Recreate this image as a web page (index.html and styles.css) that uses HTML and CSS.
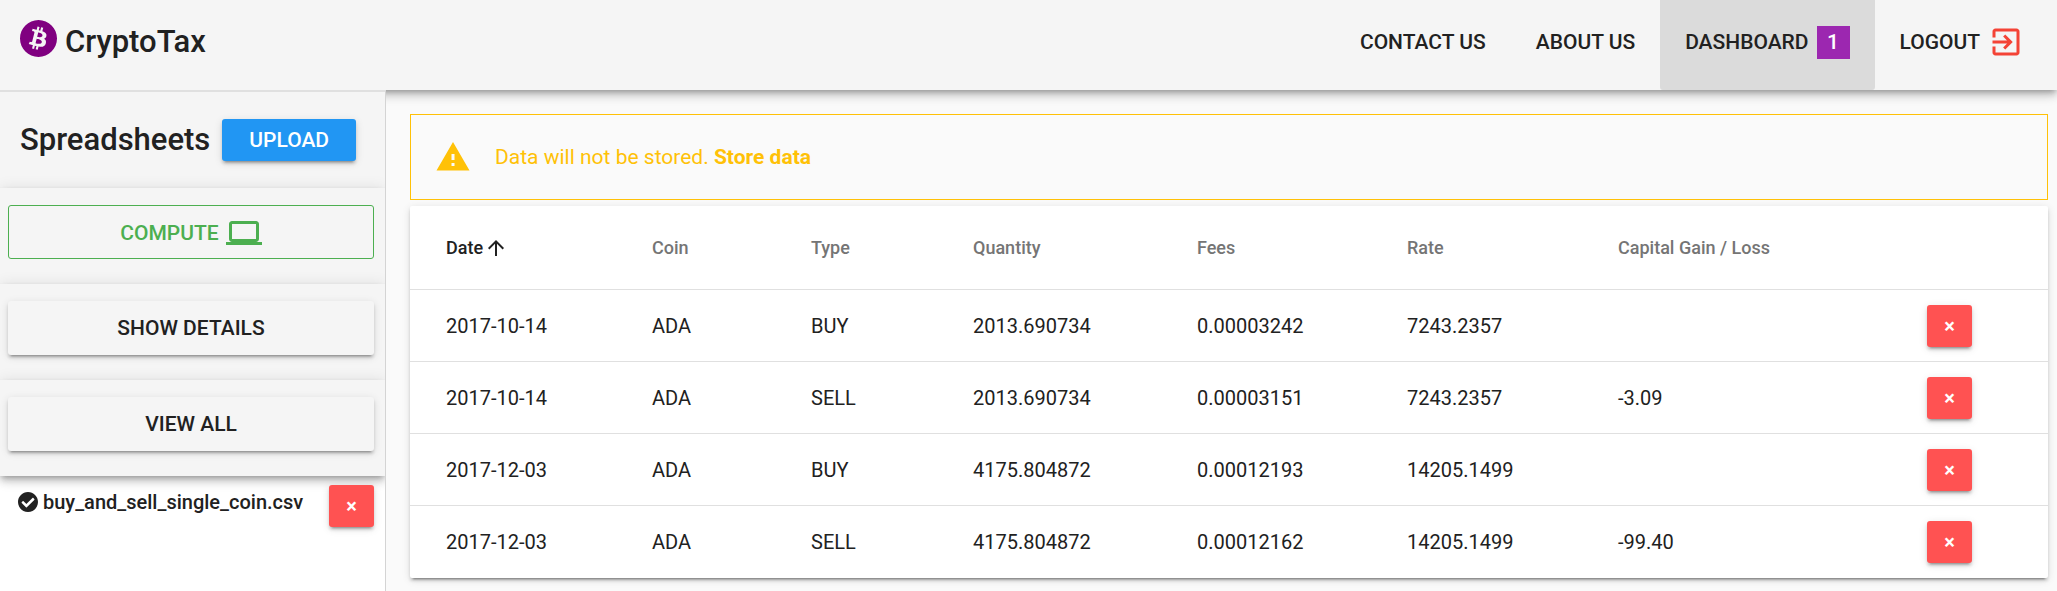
FILE: index.html
```html
<!DOCTYPE html>
<html lang="en">
<head>
<meta charset="utf-8">
<title>CryptoTax</title>
<link rel="stylesheet" href="styles.css">
</head>
<body>
<header class="topbar">
  <div class="brand">
    <svg class="brand-logo" viewBox="8 8 496 496" aria-hidden="true"><path d="M504 256c0 136.967-111.033 248-248 248S8 392.967 8 256 119.033 8 256 8s248 111.033 248 248zm-141.651-35.33c4.937-32.999-20.191-50.739-54.55-62.573l11.146-44.702-27.213-6.781-10.851 43.524c-7.154-1.783-14.502-3.464-21.803-5.13l10.929-43.81-27.198-6.781-11.153 44.686c-5.922-1.349-11.735-2.682-17.377-4.084l.031-.14-37.53-9.37-7.239 29.062s20.191 4.627 19.765 4.913c11.022 2.751 13.014 10.044 12.68 15.825l-12.696 50.925c.76.194 1.744.473 2.829.907-.907-.225-1.876-.473-2.876-.713l-17.796 71.338c-1.349 3.348-4.767 8.37-12.471 6.464.271.395-19.78-4.937-19.78-4.937l-13.51 31.147 35.414 8.827c6.588 1.651 13.045 3.379 19.4 5.006l-11.262 45.213 27.182 6.781 11.153-44.733a1038.209 1038.209 0 0 0 21.687 5.627l-11.115 44.523 27.213 6.781 11.262-45.128c46.404 8.781 81.299 5.239 95.986-36.727 11.834-33.79-.589-53.281-25.004-65.991 17.78-4.098 31.174-15.792 34.747-39.949zm-62.177 87.179c-8.41 33.79-65.308 15.523-83.755 10.943l14.944-59.899c18.446 4.603 77.6 13.717 68.811 48.956zm8.417-87.667c-7.673 30.736-55.031 15.12-70.393 11.292l13.548-54.327c15.363 3.828 64.836 10.973 56.845 43.035z"/></svg>
    <h1 class="title">CryptoTax</h1>
  </div>
  <nav class="nav">
    <a class="nav-link" href="#contact">CONTACT US</a>
    <a class="nav-link" href="#about">ABOUT US</a>
    <a class="nav-link nav-link-active" href="#dashboard">DASHBOARD <span class="badge">1</span></a>
    <a class="nav-link" href="#logout">LOGOUT
      <svg class="icon icon-logout" viewBox="0 0 24 24" aria-hidden="true"><path d="M10.09 15.59L11.5 17l5-5-5-5-1.41 1.41L12.67 11H3v2h9.67l-2.58 2.59zM19 3H5c-1.11 0-2 .9-2 2v4h2V5h14v14H5v-4H3v4c0 1.1.89 2 2 2h14c1.1 0 2-.9 2-2V5c0-1.1-.9-2-2-2z"/></svg>
    </a>
  </nav>
</header>
<div class="layout">
  <aside class="sidebar">
    <section class="panel panel-head">
      <h2 class="title">Spreadsheets</h2>
      <button class="btn btn-upload" type="button">UPLOAD</button>
    </section>
    <section class="panel">
      <button class="btn btn-wide btn-compute" type="button">COMPUTE
        <svg class="icon" viewBox="0 0 24 24" aria-hidden="true"><path d="M20 18c1.1 0 1.99-.9 1.99-2L22 6c0-1.1-.9-2-2-2H4c-1.1 0-2 .9-2 2v10c0 1.1.9 2 2 2H0v2h24v-2h-4zM4 6h16v10H4V6z"/></svg>
      </button>
    </section>
    <section class="panel"><button class="btn btn-wide" type="button">SHOW DETAILS</button></section>
    <section class="panel"><button class="btn btn-wide" type="button">VIEW ALL</button></section>
    <ul class="files">
      <li class="file">
        <span class="file-name">
          <svg class="icon-check" viewBox="8 8 496 496" aria-hidden="true"><path d="M504 256c0 136.967-111.033 248-248 248S8 392.967 8 256 119.033 8 256 8s248 111.033 248 248zM227.314 387.314l184-184c6.248-6.248 6.248-16.379 0-22.627l-22.627-22.627c-6.248-6.249-16.379-6.249-22.628 0L216 308.118l-70.059-70.059c-6.248-6.248-16.379-6.248-22.628 0l-22.627 22.627c-6.248 6.248-6.248 16.379 0 22.627l104 104c6.249 6.249 16.379 6.249 22.628.001z"/></svg>
          buy_and_sell_single_coin.csv
        </span>
        <button class="btn btn-delete" type="button" aria-label="Remove file">×</button>
      </li>
    </ul>
  </aside>
  <main class="main">
    <div class="alert" role="alert">
      <svg class="icon" viewBox="0 0 24 24" aria-hidden="true"><path d="M1 21h22L12 2 1 21zm12-3h-2v-2h2v2zm0-4h-2v-4h2v4z"/></svg>
      <p class="alert-text">Data will not be stored. <a class="alert-link" href="#store">Store data</a></p>
    </div>
    <div class="card">
      <table class="trades">
        <colgroup>
          <col class="c-date"><col class="c-coin"><col class="c-type"><col class="c-quantity"><col class="c-fees"><col class="c-rate"><col class="c-gain"><col class="c-action">
        </colgroup>
        <thead>
          <tr>
            <th class="sorted" scope="col" aria-sort="ascending"><span class="sort">Date<svg class="icon-sort" viewBox="0 0 24 24" aria-hidden="true"><path d="M4 12l1.41 1.41L11 7.83V20h2V7.83l5.58 5.59L20 12l-8-8-8 8z"/></svg></span></th>
            <th scope="col">Coin</th><th scope="col">Type</th><th scope="col">Quantity</th><th scope="col">Fees</th><th scope="col">Rate</th><th scope="col">Capital Gain / Loss</th><td></td>
          </tr>
        </thead>
        <tbody>
          <tr><td>2017-10-14</td><td>ADA</td><td>BUY</td><td>2013.690734</td><td>0.00003242</td><td>7243.2357</td><td></td><td><button class="btn btn-delete" type="button" aria-label="Delete row">×</button></td></tr>
          <tr><td>2017-10-14</td><td>ADA</td><td>SELL</td><td>2013.690734</td><td>0.00003151</td><td>7243.2357</td><td>-3.09</td><td><button class="btn btn-delete" type="button" aria-label="Delete row">×</button></td></tr>
          <tr><td>2017-12-03</td><td>ADA</td><td>BUY</td><td>4175.804872</td><td>0.00012193</td><td>14205.1499</td><td></td><td><button class="btn btn-delete" type="button" aria-label="Delete row">×</button></td></tr>
          <tr><td>2017-12-03</td><td>ADA</td><td>SELL</td><td>4175.804872</td><td>0.00012162</td><td>14205.1499</td><td>-99.40</td><td><button class="btn btn-delete" type="button" aria-label="Delete row">×</button></td></tr>
        </tbody>
      </table>
    </div>
  </main>
</div>
</body>
</html>
```
FILE: styles.css
```css
* {
  box-sizing: border-box;
}

body {
  display: flex;
  flex-direction: column;
  min-height: 100vh;
  margin: 0;
  background: #fafafa;
  color: #212121;
  font: 400 21px/30px Roboto, sans-serif;
}

.title {
  margin: 0;
  font-size: 31px;
  font-weight: 500;
  line-height: 36px;
}

.icon {
  flex: none;
  width: 36px;
  height: 36px;
  fill: currentColor;
}

/* Top bar */
.topbar {
  position: relative;
  z-index: 1;
  display: flex;
  justify-content: space-between;
  height: 90px;
  padding: 0 8px 0 20px;
  background: #f5f5f5;
  box-shadow: 0 6px 8px rgba(0, 0, 0, .14), 0 2px 15px rgba(0, 0, 0, .12), 0 3px 6px -2px rgba(0, 0, 0, .3);
}

.brand {
  display: flex;
  gap: 8px;
  padding-top: 20px;
}

.brand .title {
  padding-top: 4px;
}

.brand-logo {
  width: 37px;
  height: 37px;
  fill: #800080;
}

.nav {
  display: flex;
}

.nav-link {
  display: flex;
  align-items: center;
  gap: 8px;
  padding: 0 25px 6px;
  border-radius: 0 0 3px 3px;
  color: inherit;
  font-weight: 500;
  text-decoration: none;
}

.nav-link-active {
  background: #dbdbdb;
}

.badge {
  width: 33px;
  background: #9c27b0;
  color: #fff;
  line-height: 33px;
  text-align: center;
}

.icon-logout {
  fill: #f44336;
}

/* Page columns */
.layout {
  display: flex;
  flex: 1;
}

.sidebar {
  position: relative;
  z-index: 2;
  flex: none;
  width: 386px;
  overflow: hidden;
  border-top: 2px solid #e0e0e0;
  border-right: 1px solid #d4d4d4;
  background: #fff;
}

.panel {
  height: 96px;
  padding: 17px 11px 0 8px;
  background: #f5f5f5;
  box-shadow: 0 6px 8px rgba(0, 0, 0, .14), 0 2px 15px rgba(0, 0, 0, .12), 0 3px 6px -2px rgba(0, 0, 0, .3);
}

.panel-head {
  display: flex;
  align-items: center;
  gap: 12px;
  padding: 0 20px;
}

/* Buttons */
.btn {
  display: inline-flex;
  align-items: center;
  justify-content: center;
  height: 42px;
  padding: 0 27px;
  border: 0;
  border-radius: 3px;
  background: #f5f5f5;
  box-shadow: 0 3px 3px rgba(0, 0, 0, .14), 0 2px 8px rgba(0, 0, 0, .12), 0 4px 2px -3px rgba(0, 0, 0, .3);
  color: inherit;
  font: inherit;
  font-weight: 500;
}

.btn-upload {
  background: #2196f3;
  color: #fff;
}

.btn-wide {
  width: 100%;
  height: 54px;
}

.btn-compute {
  gap: 7px;
  padding-top: 2px;
  border: 1px solid #4caf50;
  box-shadow: none;
  color: #4caf50;
}

.btn-delete {
  width: 45px;
  padding: 0;
  background: #ff5252;
  color: #fff;
  font-size: 20px;
  font-weight: 700;
}

/* File list */
.files {
  margin: 0;
  padding: 9px 11px 0 18px;
  list-style: none;
}

.file {
  display: flex;
  align-items: flex-start;
  justify-content: space-between;
}

.file-name {
  display: flex;
  align-items: center;
  gap: 5px;
  padding-top: 2px;
  font-size: 20px;
  font-weight: 500;
}

.icon-check {
  width: 20px;
  height: 20px;
  fill: currentColor;
}

/* Content */
.main {
  flex: 1;
  min-width: 0;
  padding: 24px 9px 13px 24px;
}

.alert {
  display: flex;
  align-items: center;
  gap: 24px;
  height: 86px;
  margin-bottom: 6px;
  padding: 0 24px;
  border: 1px solid #ffc107;
  color: #ffc107;
}

.alert-text {
  margin: 0;
}

.alert-link {
  color: inherit;
  font-weight: 700;
  text-decoration: none;
}

.card {
  border-radius: 2px;
  background: #fff;
  box-shadow: 0 3px 3px rgba(0, 0, 0, .14), 0 2px 8px rgba(0, 0, 0, .12), 0 4px 2px -3px rgba(0, 0, 0, .4);
}

/* Trades table */
.trades {
  width: 100%;
  border-collapse: separate;
  border-spacing: 0;
  table-layout: fixed;
}

.c-date { width: 242px; }
.c-coin { width: 159px; }
.c-type { width: 162px; }
.c-quantity { width: 224px; }
.c-fees { width: 210px; }
.c-rate { width: 211px; }
.c-gain { width: 309px; }
.c-action { width: 121px; }

.trades th,
.trades td {
  height: 72px;
  padding: 0;
  border-bottom: 1px solid #e0e0e0;
  font-size: 20px;
  text-align: left;
  vertical-align: middle;
}

.trades th {
  height: 84px;
  color: #757575;
  font-size: 18px;
  font-weight: 500;
}

.trades th:first-child,
.trades td:first-child {
  padding-left: 36px;
}

.trades tbody tr:last-child td {
  border-bottom: 0;
}

.trades .sorted {
  color: #212121;
}

.trades .btn {
  vertical-align: middle;
}

.sort {
  display: flex;
  align-items: center;
  gap: 1px;
}

.icon-sort {
  width: 24px;
  height: 24px;
  fill: currentColor;
}
```
